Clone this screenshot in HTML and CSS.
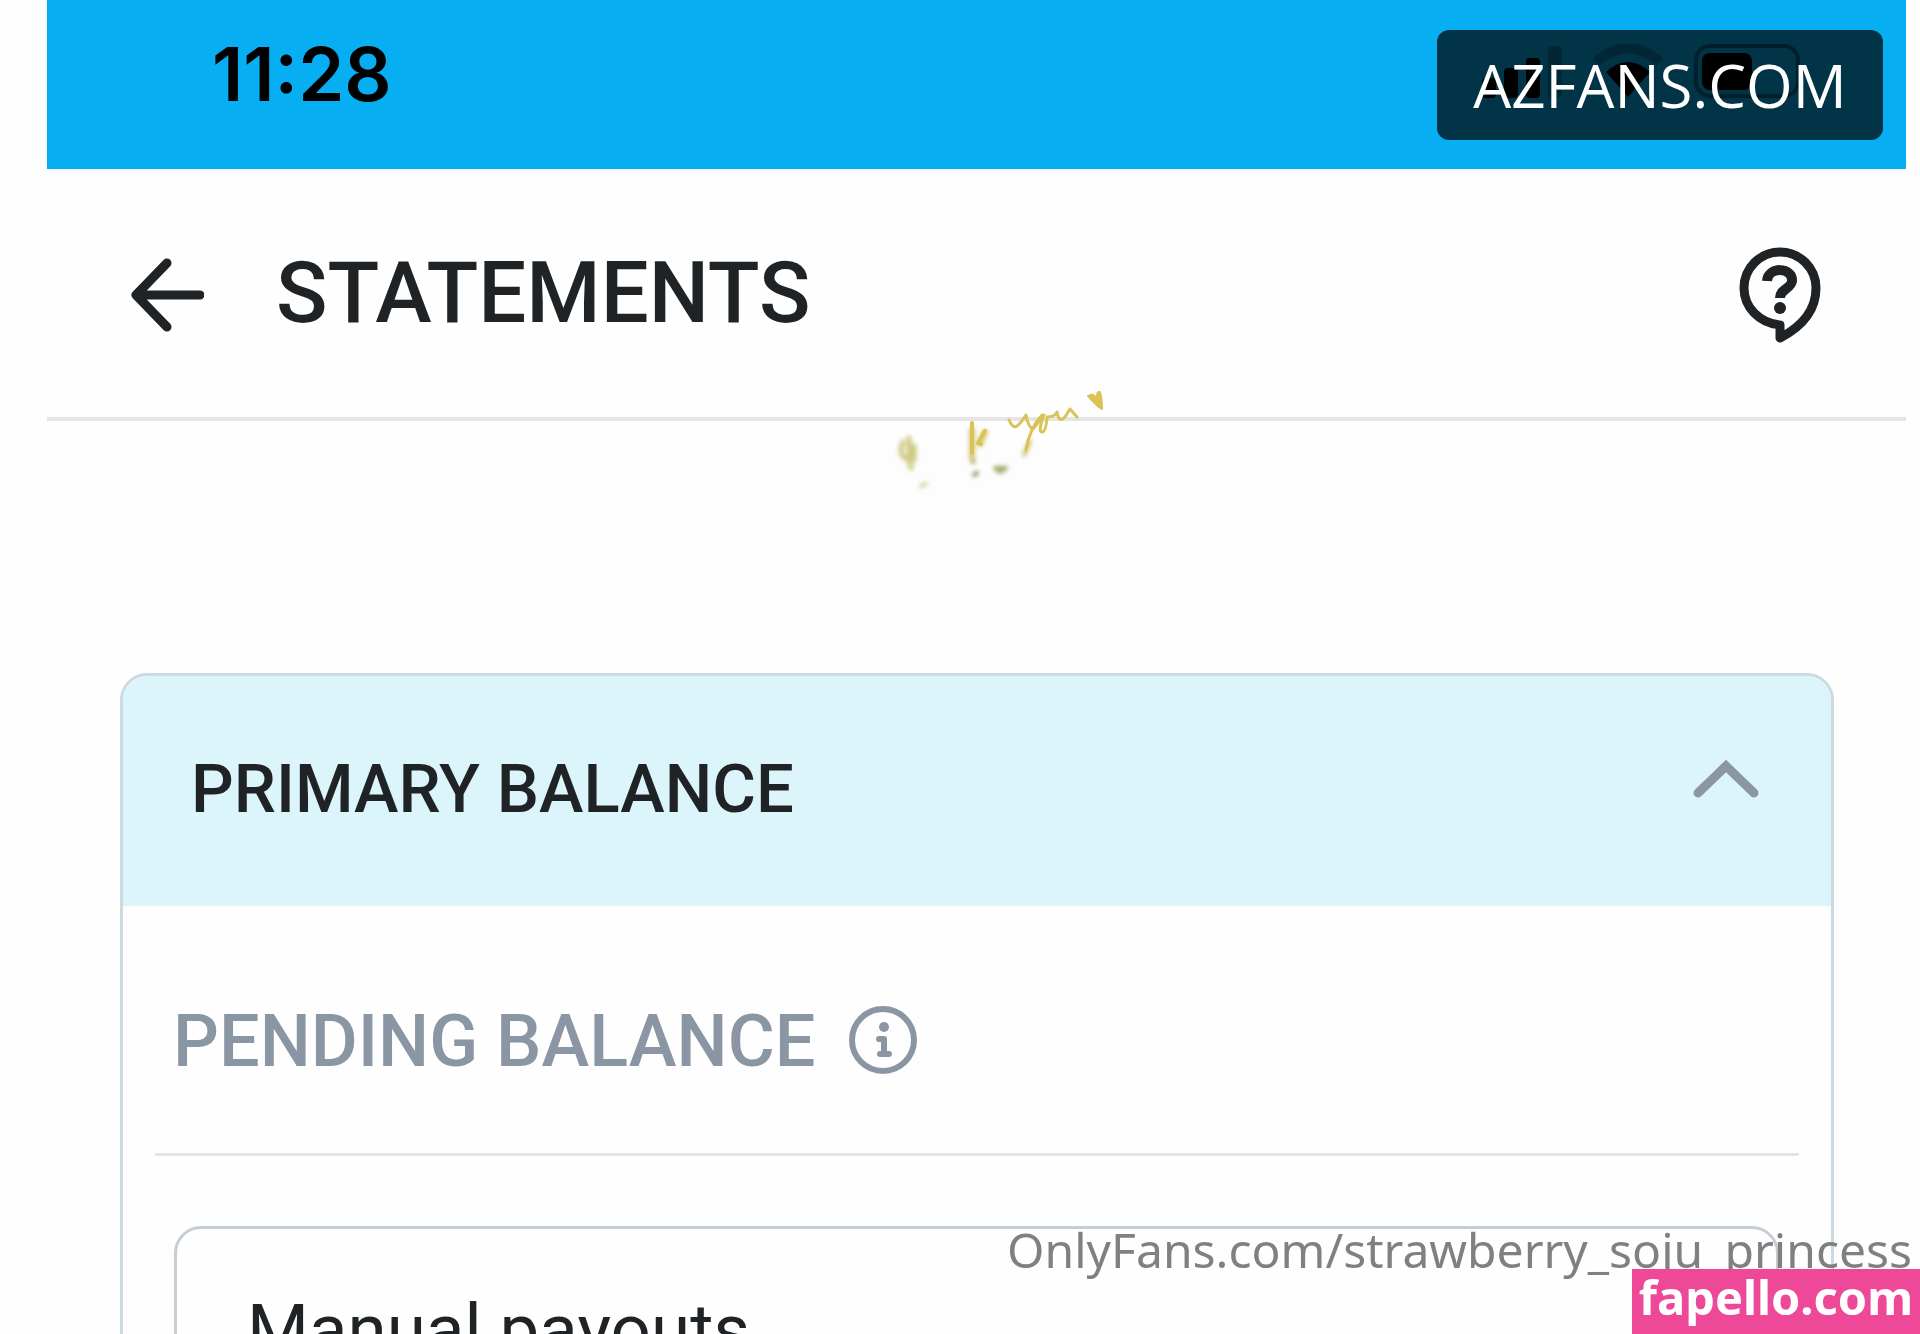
FILE: index.html
```
<!DOCTYPE html>
<html lang="en">
<head>
    <meta charset="UTF-8">
    <title>Statements</title>
    <link rel="stylesheet" href="styles.css">
</head>
<body>
<div class="screen">
    <div class="status-bar">
        <span class="time">11:28</span>
        <svg class="indicators" width="320" height="56" viewBox="0 0 320 56">
            <rect x="0" y="34" width="14" height="20" rx="4"/>
            <rect x="22" y="24" width="14" height="30" rx="4"/>
            <rect x="44" y="14" width="14" height="40" rx="4"/>
            <rect x="66" y="2" width="14" height="52" rx="4" opacity=".25"/>
            <path d="M114 18q32-28 64 0" fill="none" stroke="#000" stroke-width="10" opacity=".25"/>
            <path d="M124 28q22-20 44 0l-22 25z"/>
            <rect x="214" y="2" width="102" height="50" rx="14" fill="none" stroke="#000" stroke-width="4" opacity=".4"/>
            <rect x="220" y="9" width="50" height="37" rx="8"/>
        </svg>
    </div>
    <header class="header">
        <button class="icon-btn" aria-label="Back">
            <svg width="74" height="74" viewBox="0 0 74 74">
                <path d="M37 5L6 37l31 32M6 37h64" fill="none" stroke="#1f2326" stroke-width="9" stroke-linecap="round" stroke-linejoin="round"/>
            </svg>
        </button>
        <h1>STATEMENTS</h1>
        <button class="icon-btn help" aria-label="Help">
            <svg width="82" height="96" viewBox="0 0 82 96">
                <path d="M41 78C20 76 5 60 5 41a36 36 0 0 1 72 0c0 23-15 39-36 50z" fill="none" stroke="#1f2326" stroke-width="9" stroke-linejoin="round"/>
                <path d="M28 34c1-15 26-14 25 0c-1 8-12 8-12 17" fill="none" stroke="#1f2326" stroke-width="10"/>
                <circle cx="41" cy="61" r="6" fill="#1f2326"/>
            </svg>
        </button>
    </header>
    <main class="content">
        <div class="blank"></div>
        <section class="card">
            <button class="card-head">
                <span>PRIMARY BALANCE</span>
                <svg width="66" height="38" viewBox="0 0 66 38">
                    <path d="M5 33L33 6l28 27" fill="none" stroke="#8a96a3" stroke-width="9" stroke-linecap="round"/>
                </svg>
            </button>
            <div class="card-body">
                <div class="pending">
                    <h2>PENDING BALANCE</h2>
                    <button class="icon-btn" aria-label="About pending balance">
                        <svg width="68" height="68" viewBox="0 0 68 68">
                            <circle cx="34" cy="34" r="31" fill="none" stroke="#8a96a3" stroke-width="6"/>
                            <circle cx="35" cy="21" r="5" fill="#8a96a3"/>
                            <path d="M30 33h5v14M31 48h9" fill="none" stroke="#8a96a3" stroke-width="6" stroke-linecap="round" stroke-linejoin="round"/>
                        </svg>
                    </button>
                </div>
                <div class="payouts">Manual payouts</div>
            </div>
        </section>
    </main>
</div>

<svg class="scribble" width="280" height="140" viewBox="0 0 280 140" fill="none" stroke="#d9c257" stroke-width="4" stroke-linecap="round" stroke-linejoin="round">
    <g class="smudge">
        <path d="M43 72q-5 12 3 17M49 68v20l2 10M54 76v14" stroke="#cfca84" stroke-width="5"/>
        <path d="M61 116l5-2" stroke="#d0d19b"/>
        <path d="M113 92v-8M114 105l3-2" stroke="#8e9155"/>
        <path d="M135 98l5 4 6-4z" stroke="#a4a86c"/>
        <path d="M164 85l6-14" stroke="#cfc36c"/>
        <path d="M112 60v28M125 62l-5 12" stroke="#d6c873" stroke-width="6"/>
    </g>
    <path d="M112 53v30M125 61l-7 12 3 1"/>
    <path d="M149 50q4 9 8 6t9-11q2 12 7 14l11-14M182 45q-12 12-16 35M183 48q-5 14-1 14t5-15q8 0 10-5 2 12 8 5l5-8 7 8" stroke-width="3"/>
    <path d="M228 26q6-4 9 4-1-9 3-8 2 7 2 17-5-3-14-13z" fill="#e0c34e" stroke-width="2"/>
</svg>
<div class="badge">AZFANS.COM</div>
<div class="profile">OnlyFans.com/strawberry_soju_princess</div>
<div class="source">fapello.com</div>
</body>
</html>
```
FILE: styles.css
```
* {
    box-sizing: border-box;
}
body {
    margin: 0;
    background: #fefefe;
    color: #1f2326;
    font-family: Roboto, "Liberation Sans", sans-serif;
}
h1, h2 {
    margin: 0;
    font-weight: 500;
}
button {
    padding: 0;
    border: 0;
    background: none;
    color: inherit;
    font: inherit;
}
svg {
    display: block;
}
.screen {
    height: 100vh;
    margin: 0 14px 0 47px;
    overflow: hidden;
}
.status-bar {
    display: flex;
    justify-content: space-between;
    height: 169px;
    padding: 32px 104px 0 165px;
    background: #07aff2;
}
.time {
    color: #000;
    font: 600 74px/84px Inter, sans-serif;
}
.indicators {
    margin-top: 12px;
}
.header {
    display: flex;
    align-items: center;
    height: 252px;
    padding: 4px 85px 0 83px;
    border-bottom: 4px solid #e5e5e6;
}
.header h1 {
    margin: 0 0 4px 72px;
    font-size: 85px;
    line-height: 96px;
}
.help {
    margin-left: auto;
}
.content {
    padding: 24px 72px 0 73px;
}
.blank {
    height: 188px;
    margin-bottom: 40px;
    border-radius: 24px;
    background: #fdfdfd;
}
.card {
    border: 3px solid #ccd9e0;
    border-radius: 27px;
    overflow: hidden;
}
.card-head {
    display: flex;
    align-items: center;
    justify-content: space-between;
    width: 100%;
    height: 230px;
    padding: 0 72px 4px 68px;
    background: #dcf5fa;
    font-size: 67px;
    font-weight: 500;
    line-height: 80px;
}
.card-head svg {
    margin-bottom: 20px;
}
.card-body {
    padding: 0 32px;
}
.pending {
    display: flex;
    align-items: center;
    height: 250px;
    padding: 20px 18px 0;
    border-bottom: 3px solid #e1e5e7;
    color: #8a96a3;
}
.pending h2 {
    margin: 4px 34px 0 0;
    font-size: 72px;
    line-height: 80px;
}
.payouts {
    height: 320px;
    margin: 70px 20px 0 19px;
    padding: 61px 70px;
    border: 3px solid #c5ced5;
    border-radius: 27px;
    font-size: 71px;
    line-height: 80px;
}
.scribble {
    position: absolute;
    top: 370px;
    left: 860px;
}
.smudge {
    filter: blur(2px);
}
.badge {
    position: absolute;
    top: 30px;
    right: 37px;
    width: 446px;
    border-radius: 12px;
    background: rgba(0, 0, 0, .7);
    color: #fff;
    font: 500 60px/110px "Open Sans", sans-serif;
    text-align: center;
}
.profile,
.source {
    position: fixed;
    right: 0;
    white-space: nowrap;
}
.profile {
    bottom: 50px;
    padding-right: 8px;
    color: #808080;
    font: 48px/68px "Noto Sans", sans-serif;
}
.source {
    bottom: 0;
    padding: 0 7px 9px;
    background: #ee4899;
    color: #fff;
    font: 700 47px/56px "Noto Sans", sans-serif;
}
```
